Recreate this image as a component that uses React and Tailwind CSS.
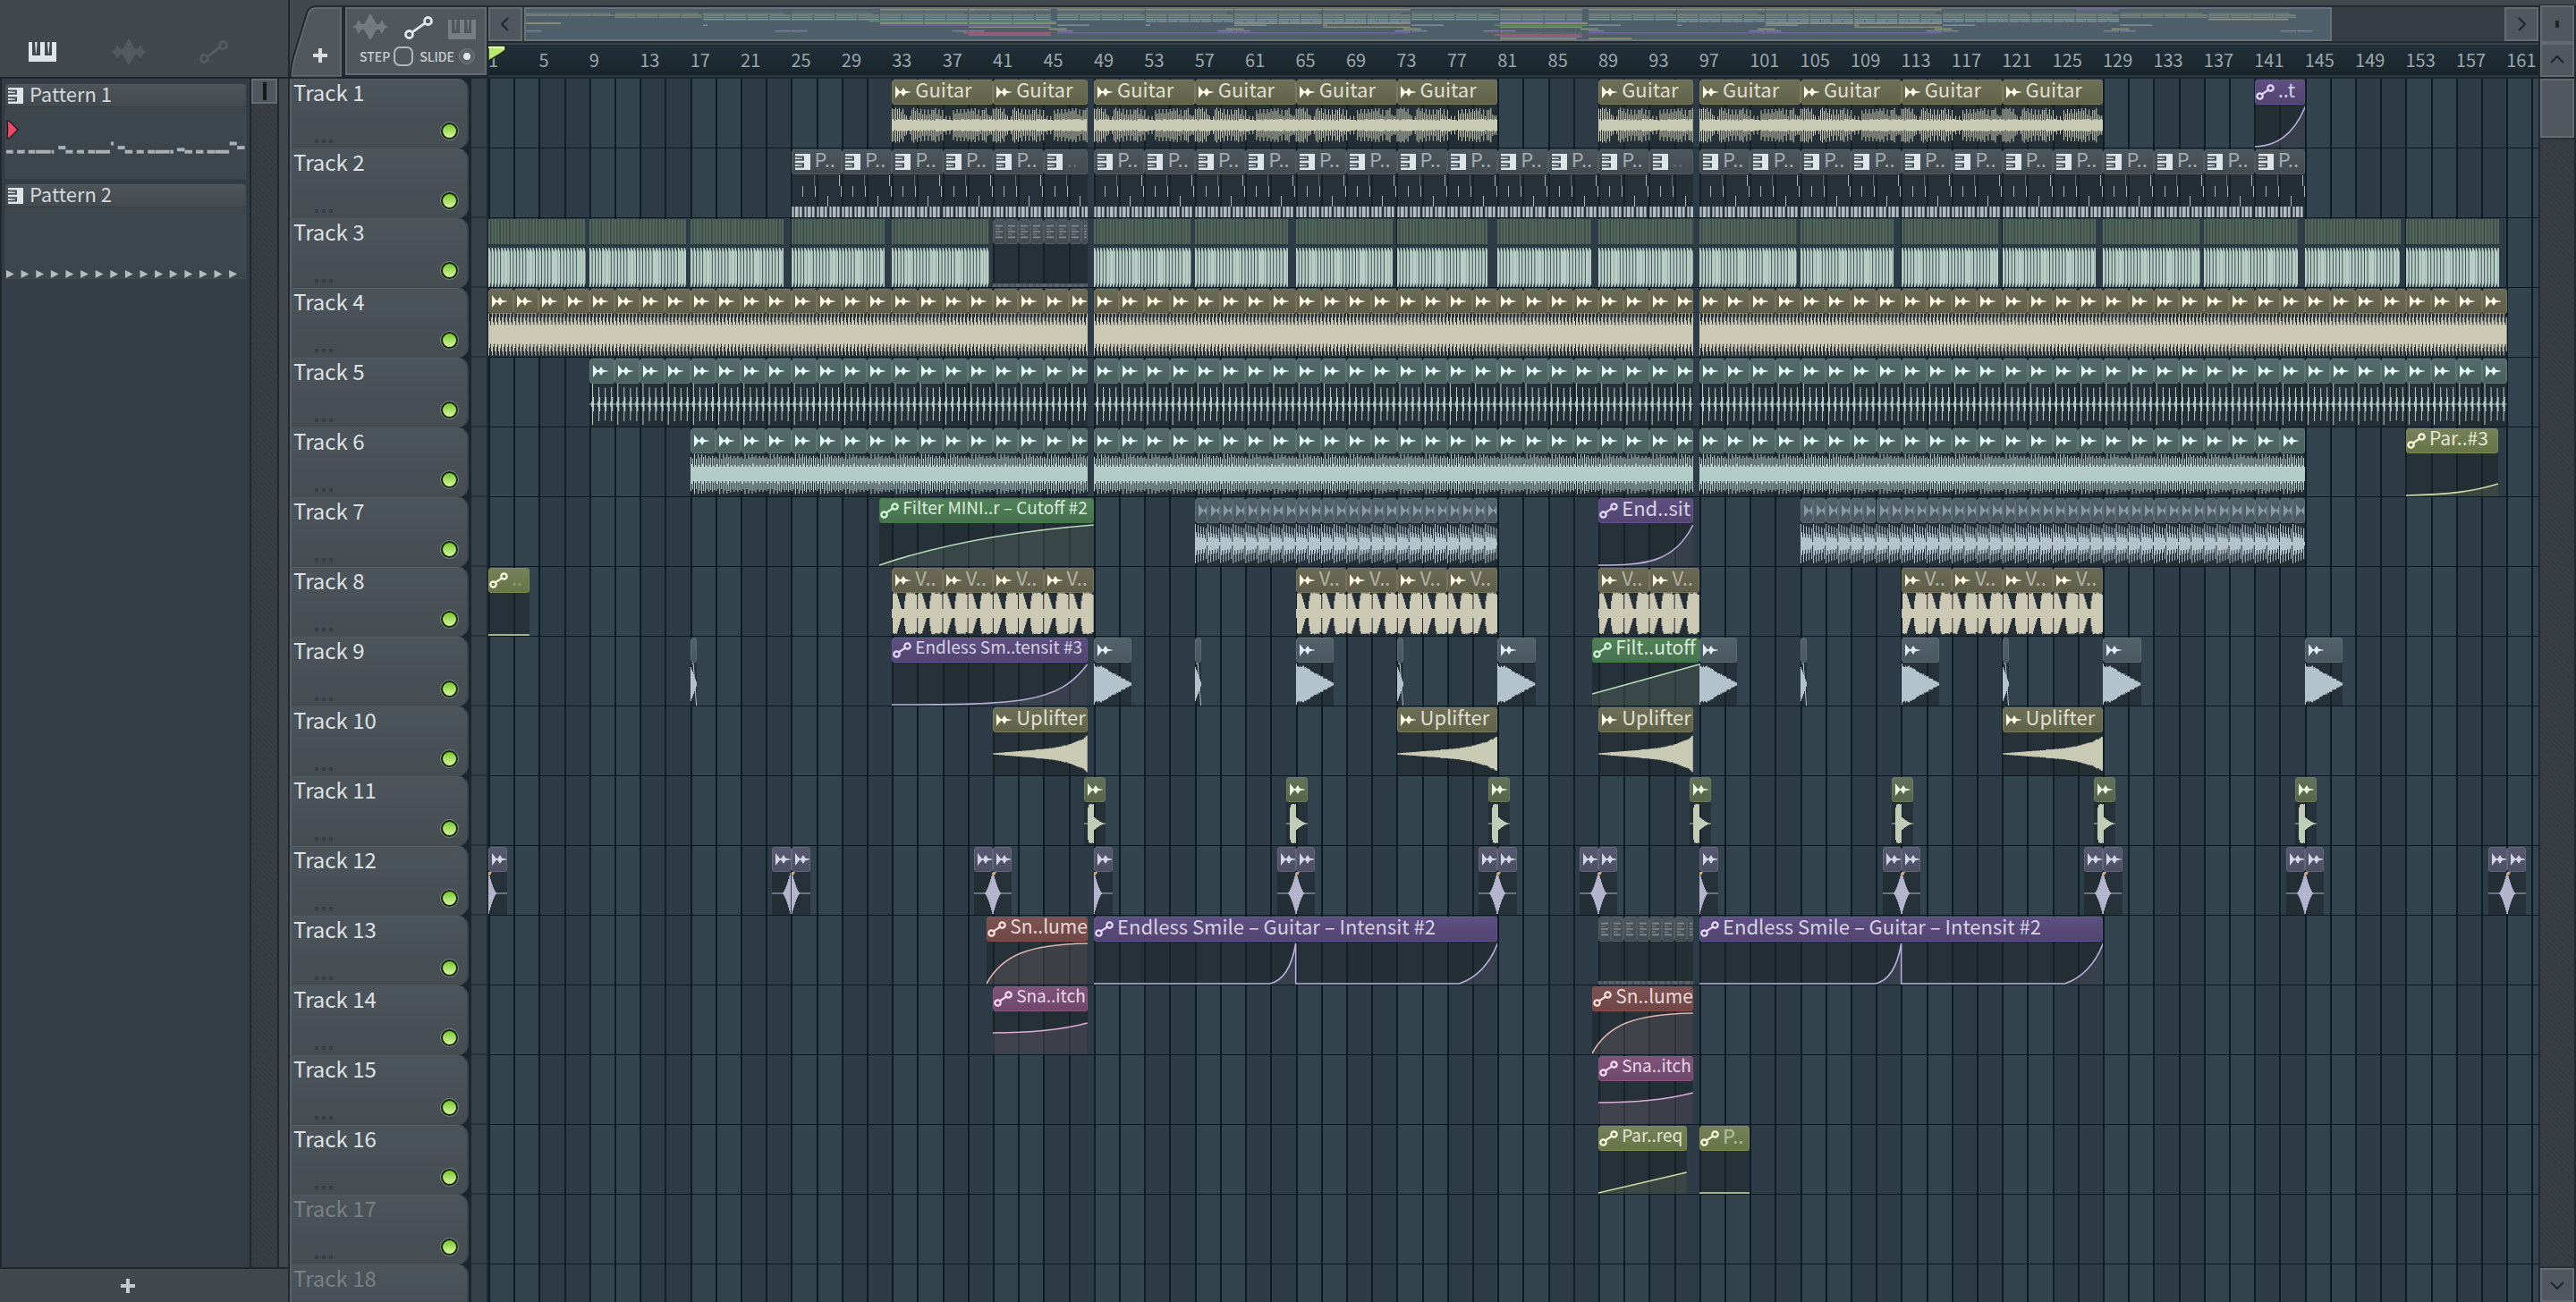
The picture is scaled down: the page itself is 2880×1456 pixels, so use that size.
import { Fragment } from "react";

const BARS_SHOWN = 162.5;
const PX = 14.1;
const BODY = 48;
const MID = 24;

const pct = (bars) => `${(bars / BARS_SHOWN) * 100}%`;

/* Clip looks: header, label, waveform or curve colour, overview colour */
const LOOK = {
  guitar: { head: "from-[#6d6f56] to-[#61634b] border-[#7b7b5c]", label: "text-[#e0dfd0]", icon: "text-[#fffbe4]", ink: "#c9cab3", mini: "#8f9577" },
  pattern: { head: "from-[#4c565d] to-[#434b51] border-[#535c62]", label: "text-[#a3abb0]", icon: "text-[#dbe5ea]", ink: "#aab3b9", mini: "#66767e" },
  kick: { head: "", label: "", icon: "", ink: "#b6ccc2", mini: "#7b9c92" },
  sand: { head: "from-[#6b6a55] to-[#605f4b] border-[#77745a]", label: "text-[#b4b3a4]", icon: "text-[#fff9e2]", ink: "#cbc8b4", mini: "#a5a283" },
  teal: { head: "from-[#55696a] to-[#4b6361] border-[#5f7877]", label: "", icon: "text-[#dffbf5]", ink: "#b4ccc8", mini: "#80a5a1" },
  slate: { head: "from-[#536269] to-[#4a5961] border-[#5d6c74]", label: "", icon: "text-[#e1ecf4]", ink: "#b3c3cb", mini: "#7f96a0" },
  mist: { head: "from-[#536269] to-[#4a5961] border-[#5d6c74]", label: "", icon: "text-[#8799a3]", ink: "#b3c3cb", mini: "#7f96a0" },
  moss: { head: "from-[#65735a] to-[#58664b] border-[#6c7a58]", label: "", icon: "text-[#edf9df]", ink: "#c0ccb5", mini: "#93a67d" },
  dusk: { head: "from-[#57596e] to-[#4d4f64] border-[#63657b]", label: "", icon: "text-[#d3d4ea]", ink: "#b4b5cd", mini: "#8682a8" },
  green: { head: "from-[#528159] to-[#47734e] border-[#3f7c48]", label: "text-[#dbe9dc]", icon: "text-[#d8fbdc]", ink: "#b5dcb8", mini: "#56975d" },
  violet: { head: "from-[#5d5080] to-[#524572] border-[#665293]", label: "text-[#d5d0e2]", icon: "text-[#e4dcfa]", ink: "#b9aedd", mini: "#7466a4" },
  olive: { head: "from-[#75825a] to-[#677548] border-[#818a4d]", label: "text-[#e2e6d2]", icon: "text-[#fbfde0]", ink: "#cfdba0", mini: "#a0a563" },
  red: { head: "from-[#7d5252] to-[#704746] border-[#8a4d4a]", label: "text-[#e8d8d8]", icon: "text-[#fbe2df]", ink: "#dfb3b0", mini: "#ab6468" },
  pink: { head: "from-[#7e547b] to-[#70476c] border-[#8a5582]", label: "text-[#e8d7e6]", icon: "text-[#fbdcf6]", ink: "#dcacd6", mini: "#b0609f" },
};

/* ---------- icons ---------- */
const PianoShape = "M0 0h4v15h9V0h5v15h8V0h5v22H0z M7 0h2.6l-1 13H8z M21 0h2.6l-1 13H22z";

function PianoIcon({ className }) {
  return (
    <svg viewBox="0 0 31 22" className={className} fill="currentColor" aria-hidden="true">
      <path d={PianoShape} />
    </svg>
  );
}
function KeysIcon({ className }) {
  return (
    <svg viewBox="0 0 17 18" className={className} fill="currentColor" aria-hidden="true">
      <path d="M10 0h7v18h-7z M0 0h10v2.4H0z M0 7.8h10v2.4H0z M0 15.6h10V18H0z M0 4.2l8 .6v1L0 6z M0 12l8 .4v1l-8 .5z" />
    </svg>
  );
}
function RowsIcon({ className }) {
  return (
    <svg viewBox="0 0 10 18" className={className} fill="currentColor" aria-hidden="true">
      <path d="M0 0h10v2H0z M0 4.500l6 .5v1L0 6z M0 8h10v2H0z M0 12l6 .5v1l-6 .3z M0 16h10v2H0z" />
    </svg>
  );
}
function WaveIcon({ className }) {
  return (
    <svg viewBox="0 0 40 28" className={className} fill="currentColor" aria-hidden="true">
      <path d="M0 14l4-2 3-6 3 5 3 0 4-7 2-4h2l2 4 4 7h3l3-5 3 6 4 2-4 2-3 6-3-5h-3l-4 7-2 4h-2l-2-4-4-7h-3l-3 5-3-6z" />
    </svg>
  );
}
function LinkIcon({ className }) {
  return (
    <svg viewBox="0 0 32 26" className={className} fill="none" stroke="currentColor" strokeWidth="2.8" aria-hidden="true">
      <circle cx="5.5" cy="20.5" r="4" />
      <circle cx="26.5" cy="5.5" r="4" />
      <path d="M9.5 17.6L22.5 8.4" />
    </svg>
  );
}
function ClipLinkIcon({ className }) {
  return (
    <svg viewBox="0 0 21 18" className={className} fill="none" stroke="currentColor" strokeWidth="2.2" aria-hidden="true">
      <circle cx="4.5" cy="13.5" r="3.2" />
      <circle cx="16.5" cy="4.5" r="3.2" />
      <path d="M7.2 11.2L14 6.6" />
    </svg>
  );
}
function SampleIcon({ className }) {
  return (
    <svg viewBox="0 0 17 14" className={className} fill="currentColor" aria-hidden="true">
      <path d="M0 0l2 2.500 3 3.800 1.600-.6L9 2l2.400 3.700L17 6.700v.6l-5.600 1L9 12 6.600 8.300 5 7.700l-3 3.800L0 14z" />
    </svg>
  );
}
function PlusIcon({ className }) {
  return (
    <svg viewBox="0 0 16 16" className={className} fill="currentColor" aria-hidden="true">
      <path d="M6 0h4v6h6v4h-6v6H6v-6H0V6h6z" />
    </svg>
  );
}
function Chevron({ d, className }) {
  return (
    <svg viewBox="0 0 16 16" className={className} fill="none" stroke="#20262b" strokeWidth="2" aria-hidden="true">
      <path d={d} />
    </svg>
  );
}

/* ---------- waveforms ---------- */
const noise = (n) => {
  const v = Math.sin(n * 127.1 + 11.7) * 43758.5453;
  return v - Math.floor(v);
};

/* Half height at column x, out of w columns; 14 columns to a bar */
const AMP = {
  guitar: (col) => {
    const k = col % 112;
    const swell = (k > 14 && k < 22) || (k > 56 && k < 68) || k > 106 ? 0.6 : 1;
    return [19.5 * swell * (0.85 + 0.15 * noise(k)), 6 + noise(k), (9 + 9 * noise(k + 2)) * swell, 5 + 2 * noise(k)][k % 4];
  },
  hats: (x) => [24, 13 + 3 * noise(x % 28), 10 + noise(x % 28), 19][x % 4],
  ticks: (x) => (x % 7 === 3 ? (x % 28 < 7 ? 23 : 18 + noise(x % 28)) : x % 7 === 4 ? 8 : x % 7 === 2 ? 3 : 0.6),
  shaker: (x) => [19 + 4 * noise((x % 28) + 3), 9 + 3 * noise(x % 28), 15 + 4 * noise(x % 28), 8][x % 4],
  perc: (x) => {
    const k = x % 14;
    if (k >= 13) return 2;
    return k % 3 === 0 ? 22 - k * 0.4 : k % 3 === 1 ? 13 - k * 0.3 : 8 - k * 0.2;
  },
  vox: (x) => {
    const k = x % 28;
    if (k < 1) return 5;
    if (k < 6) return 23 - noise(x);
    if (k < 11) return 23 - (k - 5) * 3.4;
    if (k < 14) return 5;
    if (k < 16) return 14 + (k - 14) * 6;
    if (k < 26) return 23.5 - noise(x) * 1.5;
    return 21;
  },
  crash: (x, w) => (x < 1 ? 23 : Math.max(1.5, 18.5 * Math.pow(1 - Math.max(0, x - 8) / (w - 7), 1.1) + 2 * noise(x))),
  rise: (x, w) => 0.6 + 8 * (x / w) + 11 * Math.pow(x / w, 6) + noise(x) * (x / w) * 1.6,
  stab: (x) => (x < 4 ? 0.6 : x < 5 ? 18 : x < 11 ? 21 + noise(x) : Math.max(0.6, 7 * Math.pow(1 - (x - 11) / 13, 1.6))),
  hitIn: (x, w) => Math.max(0.6, 23 * Math.pow(Math.max(0, 1 - (w - x - 1) / 9), 1.5)),
  hitOut: (x) => Math.max(0.6, 23 * Math.pow(Math.max(0, 1 - x / 9), 1.5)),
  blip: (x, w) => Math.max(0.5, 19 * (1 - x / w)),
};

function wavePath(kind, bars) {
  const amp = AMP[kind];
  const n = Math.round(bars * 14);
  const top = [];
  const bottom = [];
  for (let x = 0; x < n; x += 1) {
    const a = Math.min(23.6, amp(x, n));
    top.push(`L${x} ${(MID - a).toFixed(1)}L${x + 1} ${(MID - a).toFixed(1)}`);
    bottom.push(`L${x + 1} ${(MID + a).toFixed(1)}L${x} ${(MID + a).toFixed(1)}`);
  }
  return `M0 ${MID}${top.join("")}${bottom.reverse().join("")}Z`;
}

function Wave({ kind, bars, ink }) {
  const width = Math.round(bars * 14);
  return (
    <svg viewBox={`0 0 ${width} ${BODY}`} preserveAspectRatio="none" className="block h-full w-full" aria-hidden="true">
      <path d={wavePath(kind, bars)} fill={ink} />
      {kind === "hitOut" && <path d="M0 0h4l-2 4-2-1z" fill="#e0a45c" />}
      {kind === "blip" && <path d={`M1 1L${width * 0.45} 1L${width - 0.5} ${BODY}`} fill="none" stroke={ink} />}
    </svg>
  );
}

/* ---------- automation curves, x in percent of the clip ---------- */
const CURVE = {
  tail: "M0 47C40 46 75 36 100 2",
  bow: "M0 47Q42 13 100 2",
  late: "M0 47C65 47 85 46 100 2",
  late2: "M0 47C48 47 80 45 100 2",
  ease: "M0 47C15 16 40 3 100 2",
  pitch: "M0 24C40 24 75 20 100 13",
  ramp: "M0 35L100 2",
  half: "M0 47L100 24",
  flat: "M0 47L100 47",
  soft: "M0 47C50 46 75 42 100 34",
  twice: "M0 47L43.5 47C47 44 49 28 50 2L50 47L90.5 47C95 40 98 25 100 2",
};

function Curve({ kind, ink }) {
  return (
    <svg viewBox="0 0 100 48" preserveAspectRatio="none" className="block h-full w-full" aria-hidden="true">
      <path d={`${CURVE[kind]}L100 48L0 48Z`} fill={ink} fillOpacity="0.14" />
      <path d={CURVE[kind]} fill="none" stroke={ink} strokeWidth="1.6" vectorEffect="non-scaling-stroke" />
    </svg>
  );
}

function PatternNotes({ bars }) {
  const width = bars * PX;
  const groups = [0, 14, 28, 42];
  return (
    <svg viewBox={`0 0 ${width} ${BODY}`} preserveAspectRatio="none" className="block h-full w-full" aria-hidden="true">
      <path d="M25 1h1v12h-1z" fill="#5d676d" />
      <path d="M53 1h1v12h-1z M12 13h1v12h-1z M26 13h1v12h-1z M55 13h1v12h-1z M40 24h1v12h-1z" fill="#aab3b9" />
      {groups.map((g) => (
        <Fragment key={g}>
          <path d={`M${g} 36h12v12h-12z`} fill="#7f898f" />
          <path d={`M${g + 1} 36h1v12h-1z M${g + 4} 36h3v12h-3z M${g + 9} 36h2v12h-2z`} fill="#b3bcc2" />
          <path d={`M${g + 3} 36h1v12h-1z M${g + 8} 36h1v12h-1z`} fill="#3a444b" />
        </Fragment>
      ))}
    </svg>
  );
}

/* A run of quarter-bar kick slices */
function KickRun({ bars }) {
  const width = bars * PX;
  const step = PX / 4;
  const count = Math.round(width / step);
  const list = Array.from({ length: count }, (_, i) => i);
  return (
    <svg viewBox={`0 0 ${width} 76`} preserveAspectRatio="none" className="block h-full w-full" aria-hidden="true">
      <rect width={width} height="28" fill="#54675e" />
      <rect y="28" width={width} height="48" fill="#2a3a42" />
      {list.map((i) => {
        const x = i * step;
        const lit = i % 8 === 4 || i % 8 === 5 ? step : 2.7;
        return (
          <Fragment key={i}>
            <rect x={x + 2} width="1.4" height="28" fill={i % 3 ? "#41524a" : "#3a4841"} />
            <path d={`M${x} 32h1.2l${lit - 1.2} 5v34l${1.2 - lit} 5h-1.2z`} fill="#b9cfc5" />
          </Fragment>
        );
      })}
    </svg>
  );
}

/* ---------- arrangement ---------- */
const range = (from, to, step) => {
  const out = [];
  for (let b = from; b < to; b += step) out.push(b);
  return out;
};
const tile = (spans, step, props) =>
  spans.flatMap(([from, to]) => range(from, to, step).map((b) => ({ from: b, to: Math.min(b + step, to), ...props })));

const sample = (look, wave, label) => ({ look, wave, label, icon: "sample" });
const auto = (from, to, look, curve, label, extra) => ({ from, to, look, curve, label, icon: "link", ...extra });

/* Looped samples: one header per repeat, one waveform per unbroken span */
const loop = (spans, step, look, wave, label) => [
  ...tile(spans, step, { look, label, icon: "sample" }),
  ...spans.map(([from, to]) => ({ from, to, look, run: wave })),
];

const crash = (b) => ({ from: b, to: b + 3, ...sample("slate", "crash") });
const blip = (b) => ({ from: b, to: b + 0.5, look: "slate", wave: "blip" });
const hitIn = (b) => ({ from: b - 1.5, to: b, ...sample("dusk", "hitIn") });
const hitOut = (b) => ({ from: b, to: b + 1.5, ...sample("dusk", "hitOut") });
const kicks = [
  [0, 7.7], [8, 15.7], [16, 23.4], [24, 31.4], [32, 39.7], [48, 55.7], [56, 63.4], [64, 71.7], [72, 79.2], [80, 87.4],
  [88, 95.5], [96, 103.7], [104, 111.4], [112, 119.7], [120, 127.4], [128, 135.7], [136, 143.4], [144, 151.6], [152, 159.4],
];
const rowsClip = { look: "pattern", strip: true, icon: "rows" };

const TRACKS = [
  [
    ...loop([[32, 47.5], [48, 80], [88, 95.5], [96, 128]], 8, "guitar", "guitar", "Guitar"),
    auto(140, 144, "violet", "tail", "..t"),
  ],
  tile([[24, 47.5], [48, 95.5], [96, 144]], 4, { look: "pattern", notes: true, icon: "keys", label: "P.." }).map((c) =>
    c.to - c.from < 4 ? { ...c, label: "..", faint: true } : c
  ),
  [...kicks.map(([from, to]) => ({ from, to, look: "kick", kick: true })), ...tile([[40, 47.5]], 1, rowsClip)],
  loop([[0, 47.5], [48, 95.5], [96, 160]], 2, "sand", "hats"),
  loop([[8, 47.5], [48, 95.5], [96, 160]], 2, "teal", "ticks"),
  [
    ...loop([[16, 47.5], [48, 95.5], [96, 144]], 2, "teal", "shaker"),
    auto(152, 159.3, "olive", "soft", "Par..#3", { size: "mid" }),
  ],
  [
    auto(31, 48, "green", "bow", "Filter MINI..r – Cutoff #2", { size: "small" }),
    ...loop([[56, 80], [104, 144]], 1, "mist", "perc"),
    auto(88, 95.5, "violet", "late2", "End..sit"),
  ],
  [
    auto(0, 3.25, "olive", "flat", "..", { faint: true }),
    ...loop([[32, 48], [64, 80], [88, 96], [112, 128]], 4, "sand", "vox", "V.."),
  ],
  [
    ...[16, 56, 72, 104, 120].map(blip),
    auto(32, 47.5, "violet", "late", "Endless Sm..tensit #3", { size: "small" }),
    auto(87.5, 96, "green", "ramp", "Filt..utoff", { size: "mid" }),
    ...[48, 64, 80, 96, 112, 128, 144].map(crash),
  ],
  [[40, 47.5], [72, 80], [88, 95.5], [120, 128]].map(([from, to]) => ({ from, to, ...sample("guitar", "rise", "Uplifter") })),
  [48, 64, 80, 96, 112, 128, 144].map((b) => ({ from: b - 0.75, to: b + 0.95, ...sample("moss", "stab") })),
  [
    ...[24, 40, 64, 80, 88, 112, 128, 144, 160].map(hitIn),
    ...[0, 24, 40, 48, 64, 80, 88, 96, 112, 128, 144, 160].map(hitOut),
  ],
  [
    auto(39.5, 47.5, "red", "ease", "Sn..lume", { size: "mid" }),
    auto(48, 80, "violet", "twice", "Endless Smile – Guitar – Intensit #2"),
    ...tile([[88, 95.5]], 1, rowsClip),
    auto(96, 128, "violet", "twice", "Endless Smile – Guitar – Intensit #2"),
  ],
  [auto(40, 47.5, "pink", "pitch", "Sna..itch", { size: "small" }), auto(87.5, 95.5, "red", "ease", "Sn..lume", { size: "mid" })],
  [auto(88, 95.5, "pink", "pitch", "Sna..itch", { size: "small" })],
  [auto(88, 95, "olive", "half", "Par..req", { size: "small" }), auto(96, 100, "olive", "flat", "P..", { dim: true })],
  [],
  [],
];

function ClipIcon({ kind, look }) {
  if (kind === "sample") return <SampleIcon className={`ml-[3px] mt-1.5 h-3.5 w-[17px] shrink-0 ${look.icon}`} />;
  if (kind === "keys") return <KeysIcon className={`ml-[3px] mt-1 h-[18px] w-[17px] shrink-0 ${look.icon}`} />;
  if (kind === "link") return <ClipLinkIcon className={`mt-1 h-[18px] w-[21px] shrink-0 ${look.icon}`} />;
  if (kind === "rows") return <RowsIcon className="ml-[2px] mt-1 h-[18px] w-2 shrink-0 text-[#818b91]" />;
  return null;
}

const SIZES = { small: "text-[19px]", mid: "text-[21px]" };

function Clip({ clip }) {
  const look = LOOK[clip.look];
  const bars = clip.to - clip.from;
  const place = { left: pct(clip.from), width: pct(bars) };
  if (clip.run) {
    return (
      <div className="absolute bottom-px h-12" style={place}>
        <Wave kind={clip.run} bars={bars} ink={look.ink} />
      </div>
    );
  }
  if (clip.kick) {
    return (
      <div className="absolute top-px h-[76px]" style={place}>
        <KickRun bars={bars} />
      </div>
    );
  }
  const size = SIZES[clip.size] || "text-[22px]";
  const shade = clip.faint ? "opacity-30" : clip.dim ? "opacity-60" : "";
  return (
    <div className="absolute top-px h-[76px]" style={place}>
      <div className={`flex h-7 items-start rounded-[3px] border bg-linear-to-b ${clip.label ? "" : "overflow-hidden"} ${look.head}`}>
        <span className={clip.icon === "rows" ? "flex" : "flex w-[25px] shrink-0"}>
          <ClipIcon kind={clip.icon} look={look} />
        </span>
        {clip.label && <span className={`whitespace-nowrap leading-[18px] ${size} ${look.label} ${shade}`}>{clip.label}</span>}
      </div>
      <div className="h-12 bg-[#1e2228]/55">
        {clip.wave && <Wave kind={clip.wave} bars={bars} ink={look.ink} />}
        {clip.curve && <Curve kind={clip.curve} ink={look.ink} />}
        {clip.notes && <PatternNotes bars={bars} />}
        {clip.strip && (
          <div className="flex h-full items-end">
            <div className="h-1 w-full bg-[repeating-linear-gradient(90deg,#59636a_0,#59636a_3px,#4a545b_3px,#4a545b_6px)]" />
          </div>
        )}
      </div>
    </div>
  );
}

function Grid() {
  return (
    <div className="absolute inset-0 flex overflow-hidden" aria-hidden="true">
      {range(0, BARS_SHOWN, 2).map((b) => (
        <div
          key={b}
          className={`shrink-0 border-l-2 border-[#0d1d26] ${b % 8 < 4 ? "bg-[#33444e]" : "bg-[#2d3c46]"}`}
          style={{ width: pct(2) }}
        />
      ))}
    </div>
  );
}

function TrackHeader({ index }) {
  const on = index < 16;
  return (
    <div className="flex h-[78px] shrink-0 bg-[#1b262d]">
      <div className="flex w-[200px] justify-between rounded-r-xl border-l-2 border-r-2 border-t border-l-[#596168] border-r-[#3a444b] border-t-[#525a60] bg-linear-to-b from-[#4c555b] to-[#454d53] pl-0.5 pr-2.5">
        <div className="flex flex-col">
          <span className={`text-2xl leading-[27px] ${on ? "text-[#dde1e3]" : "text-[#798186]"}`}>Track {index + 1}</span>
          <button type="button" aria-label={`Track ${index + 1} options`} className="ml-6 mt-9 flex gap-1 py-1">
            <i className="size-1 bg-[#363e45]" />
            <i className="size-1 bg-[#363e45]" />
            <i className="size-1 bg-[#363e45]" />
          </button>
        </div>
        <input
          type="checkbox"
          defaultChecked
          aria-label={`Track ${index + 1} on`}
          className="mt-12 size-[19px] appearance-none rounded-full border-2 border-[#12260a] bg-linear-to-b from-[#74c624] to-[#d9f79a] outline outline-1 outline-[#7d868b]"
        />
      </div>
    </div>
  );
}

function SquareButton({ label, d, className }) {
  return (
    <button type="button" aria-label={label} className={`flex shrink-0 items-center justify-center border-2 border-[#646c73] bg-[#50575e] ${className}`}>
      <Chevron d={d} className="size-4" />
    </button>
  );
}

const HATCH = "bg-[repeating-linear-gradient(45deg,#3a3f45_0,#3a3f45_2px,#353b41_2px,#353b41_4px)]";

function PatternCard({ name, children }) {
  return (
    <button type="button" className="flex flex-col text-left">
      <span className="flex h-[25px] items-start gap-[7px] rounded-sm border-t border-[#545c62] bg-linear-to-b from-[#4d545a] to-[#434a50] pl-[3px]">
        <KeysIcon className="mt-[3px] h-[18px] w-[17px] text-[#dbe5ea]" />
        <span className="text-[22px] leading-[18px] text-[#d3d8db]">{name}</span>
      </span>
      <span className="mt-px block h-20 w-full border border-[#414b52] bg-[#3d464d]">{children}</span>
    </button>
  );
}

const NOTES = [
  [20, 19, 2], [50, 21, 2], [81, 19, 2], [102, 41, 2], [145, 7, 2], [164, 20, 1], [184, 20, 2], [215, 20, 2], [246, 19, 2],
  [267, 40, 2], [309, 8, 0], [328, 20, 1], [348, 21, 2], [380, 20, 2], [411, 20, 2], [432, 39, 2], [473, 9, 2], [492, 21, 1.5],
  [513, 21, 2], [544, 21, 2], [575, 21, 2], [597, 39, 2], [637, 20, 0], [658, 21, 1],
];

function Browser() {
  return (
    <aside className="flex w-[324px] shrink-0 flex-col border-r-2 border-[#23292e] bg-[#41494f]">
      <div className="flex h-[86px] items-end pb-3.5 pl-7">
        <button type="button" aria-label="Patterns" className="flex h-7 w-24 items-center pl-1 text-[#dfe5e8]">
          <PianoIcon className="h-[22px] w-[31px]" />
        </button>
        <button type="button" aria-label="Audio clips" className="flex h-7 w-[99px] items-center text-[#525b61]">
          <WaveIcon className="h-7 w-10" />
        </button>
        <button type="button" aria-label="Automation clips" className="flex h-7 w-10 items-center text-[#545d63]">
          <LinkIcon className="h-[26px] w-8" />
        </button>
      </div>
      <div className="flex flex-1 border-y-2 border-[#20282e] pr-2.5">
        <div className="relative flex flex-1 flex-col gap-1.5 border-x-2 border-[#20282e] bg-[#343d45] px-1 pt-1.5">
          <PatternCard name="Pattern 1">
            <svg viewBox="20 363 660 237" preserveAspectRatio="none" className="block h-full w-full" aria-hidden="true">
              {NOTES.map(([x, w, lane]) => (
                <rect key={x} x={x} y={477 + lane * 14} width={w} height="12" fill="#a9b1b6" />
              ))}
            </svg>
          </PatternCard>
          <PatternCard name="Pattern 2">
            <svg viewBox="0 0 270 78" preserveAspectRatio="none" className="block h-full w-full" aria-hidden="true">
              {range(0, 16, 1).map((i) => (
                <path key={i} d={`M${i * 16.8} 69l9 4.500-9 4.500z`} fill="#b4bbbf" />
              ))}
            </svg>
          </PatternCard>
          <svg viewBox="0 0 14 22" className="absolute left-1 top-[46px] h-[22px] w-4" aria-hidden="true">
            <path d="M1 1l3 1 9 9-9 9-3 1c1-7 1-13 0-20z" fill="#f04765" stroke="#15191c" strokeWidth="1.2" />
          </svg>
        </div>
        <div className={`w-[31px] border-r-2 border-[#20282e] ${HATCH}`}>
          <button type="button" aria-label="Scroll patterns" className="flex h-7 w-[29px] items-center justify-center border-2 border-[#646c73] bg-[#50575e]">
            <i className="h-5 w-1 bg-[#15191c]" />
          </button>
        </div>
      </div>
      <button type="button" aria-label="Add pattern" className="flex h-[37px] w-[286px] items-center justify-center text-[#c3c9cd]">
        <PlusIcon className="size-4" />
      </button>
    </aside>
  );
}

function Overview() {
  return (
    <svg viewBox="0 0 163 34" preserveAspectRatio="none" className="block h-full w-full" aria-hidden="true">
      {TRACKS.map((clips, row) =>
        clips
          .filter((c) => !c.run)
          .map((c, i) => (
            <rect
              key={`${row}-${i}`}
              x={c.from}
              y={row * 2.17}
              width={Math.max(0.3, c.to - c.from - 0.1)}
              height={row === 3 || row === 4 ? 1 : row === 1 ? 1.4 : 1.6}
              fill={LOOK[c.look].mini}
              fillOpacity={c.look === "pattern" ? 0.5 : c.look === "kick" ? 0.45 : 0.85}
            />
          ))
      )}
    </svg>
  );
}

function Toolbar() {
  return (
    <div className="flex h-[88px] shrink-0 border-b-2 border-[#20282e] bg-[#41494f] pt-1.5">
      <button type="button" aria-label="Add track" className="relative flex w-[60px] items-end justify-center pb-4 pl-2 text-[#d9dde0]">
        <svg viewBox="0 0 60 80" preserveAspectRatio="none" className="absolute inset-0 h-full w-full" aria-hidden="true">
          <path d="M1 80C1 70 2 66 4 58L18 12C20 4 23 1 30 1H59V80Z" fill="#50585e" stroke="#23292e" strokeWidth="2" />
          <path d="M2.500 79C2.500 70 4 66 6 58L20 12C22 5 24 3 30 3H57V79Z" fill="none" stroke="#646c73" strokeWidth="1.600" />
        </svg>
        <PlusIcon className="relative size-4" />
      </button>
      <div className="flex w-[162px] flex-col justify-between border-2 border-[#23292e] bg-[#50585e] outline-2 -outline-offset-4 outline-[#646c73]">
        <div className="flex h-11 items-end justify-between pb-2 pl-2 pr-3">
          <button type="button" aria-label="Audio" className="text-[#737b80]">
            <WaveIcon className="h-7 w-10" />
          </button>
          <button type="button" aria-label="Automation" className="text-[#e3e7ea]">
            <LinkIcon className="h-[26px] w-8" />
          </button>
          <button type="button" aria-label="Pattern" className="text-[#767e83]">
            <PianoIcon className="h-[22px] w-[31px]" />
          </button>
        </div>
        <div className="flex h-8 items-start justify-between pl-4 pr-3.5 text-sm leading-[22px] font-medium text-[#c9ced2]">
          <label className="flex items-center gap-1">
            STEP
            <input type="checkbox" className="size-[22px] appearance-none rounded-[7px] border-2 border-[#b2b9be]" />
          </label>
          <label className="flex items-center gap-1.5">
            SLIDE
            <input type="radio" defaultChecked className="size-4 appearance-none rounded-full border-4 border-[#5b6369] bg-[#dfe4e7] outline outline-1 outline-[#777f85]" />
          </label>
        </div>
      </div>
      <div className="flex flex-1 flex-col">
        <div className="flex h-[42px] border-y-2 border-[#23292e]">
          <SquareButton label="Scroll left" d="M11 1L4 8l7 7" className="w-[38px]" />
          <div className="flex flex-1 bg-[#363c43] pl-0.5">
            <div className="w-[91.3%] border-2 border-[#687379] bg-[#50606a]">
              <Overview />
            </div>
          </div>
          <SquareButton label="Scroll right" d="M5 1l7 7-7 7" className="w-[38px]" />
        </div>
        <div className="relative flex h-[38px] overflow-hidden border-y-2 border-t-[#3a444b] border-b-[#2b3840] bg-linear-to-b from-[#22303a] to-[#1a252b]">
          {range(0, BARS_SHOWN, 4).map((b) => (
            <span key={b} className="shrink-0 text-xl leading-[34px] text-[#9aa6ad]" style={{ width: pct(4) }}>
              {b + 1}
            </span>
          ))}
          <svg viewBox="0 0 22 20" className="absolute left-0 top-0 h-5 w-[22px]" aria-hidden="true">
            <path d="M0 1H19V6L12 11 0 18Z" fill="#b8ea72" stroke="#1a2a10" strokeWidth="1.500" />
            <path d="M0 2H18V5L14 4H0Z" fill="#e8fbc4" />
          </svg>
        </div>
      </div>
      <div className="flex w-[42px] flex-col border-x-2 border-[#23292e]">
        <button type="button" aria-label="Zoom" className="flex h-[42px] items-center justify-center border-2 border-[#646c73] bg-[#50575e] outline outline-1 outline-[#23292e]">
          <i className="h-2 w-1 bg-[#20262b]" />
        </button>
        <SquareButton label="Scroll up" d="M1 11l7-7 7 7" className="h-[38px]" />
      </div>
    </div>
  );
}

export default function App() {
  return (
    <div className="flex h-screen w-full overflow-hidden bg-[#41494f] font-['Noto_Sans_CJK_SC','Noto_Sans',sans-serif]">
      <Browser />
      <main className="flex min-w-0 flex-1 flex-col">
        <Toolbar />
        <div className="flex min-h-0 flex-1">
          <div className="flex w-[222px] shrink-0">
            <div className="flex flex-1 flex-col">
              {TRACKS.map((_, i) => (
                <TrackHeader key={i} index={i} />
              ))}
            </div>
            <div className="flex w-[19px] flex-col border-r-2 border-[#1f2a31]">
              {TRACKS.map((_, i) => (
                <div key={i} className="h-[78px] shrink-0 border-b-2 border-[#26323a] bg-[#343f47]" />
              ))}
            </div>
          </div>
          <div className="relative min-w-0 flex-1">
            <Grid />
            <div className="relative flex flex-col">
              {TRACKS.map((clips, i) => (
                <div key={i} className="relative h-[78px] shrink-0 border-b border-[#0b1920]">
                  {clips.map((c, k) => (
                    <Clip key={k} clip={c} />
                  ))}
                </div>
              ))}
            </div>
          </div>
          <div className="flex w-[42px] shrink-0 flex-col border-x-2 border-[#23292e]">
            <button type="button" aria-label="Scroll tracks" className="h-[66px] border-2 border-[#646c73] bg-[#50575e]" />
            <div className={`flex-1 border-y-2 border-[#2b3138] ${HATCH}`} />
            <SquareButton label="Scroll down" d="M1 5l7 7 7-7" className="h-[38px]" />
          </div>
        </div>
      </main>
    </div>
  );
}
